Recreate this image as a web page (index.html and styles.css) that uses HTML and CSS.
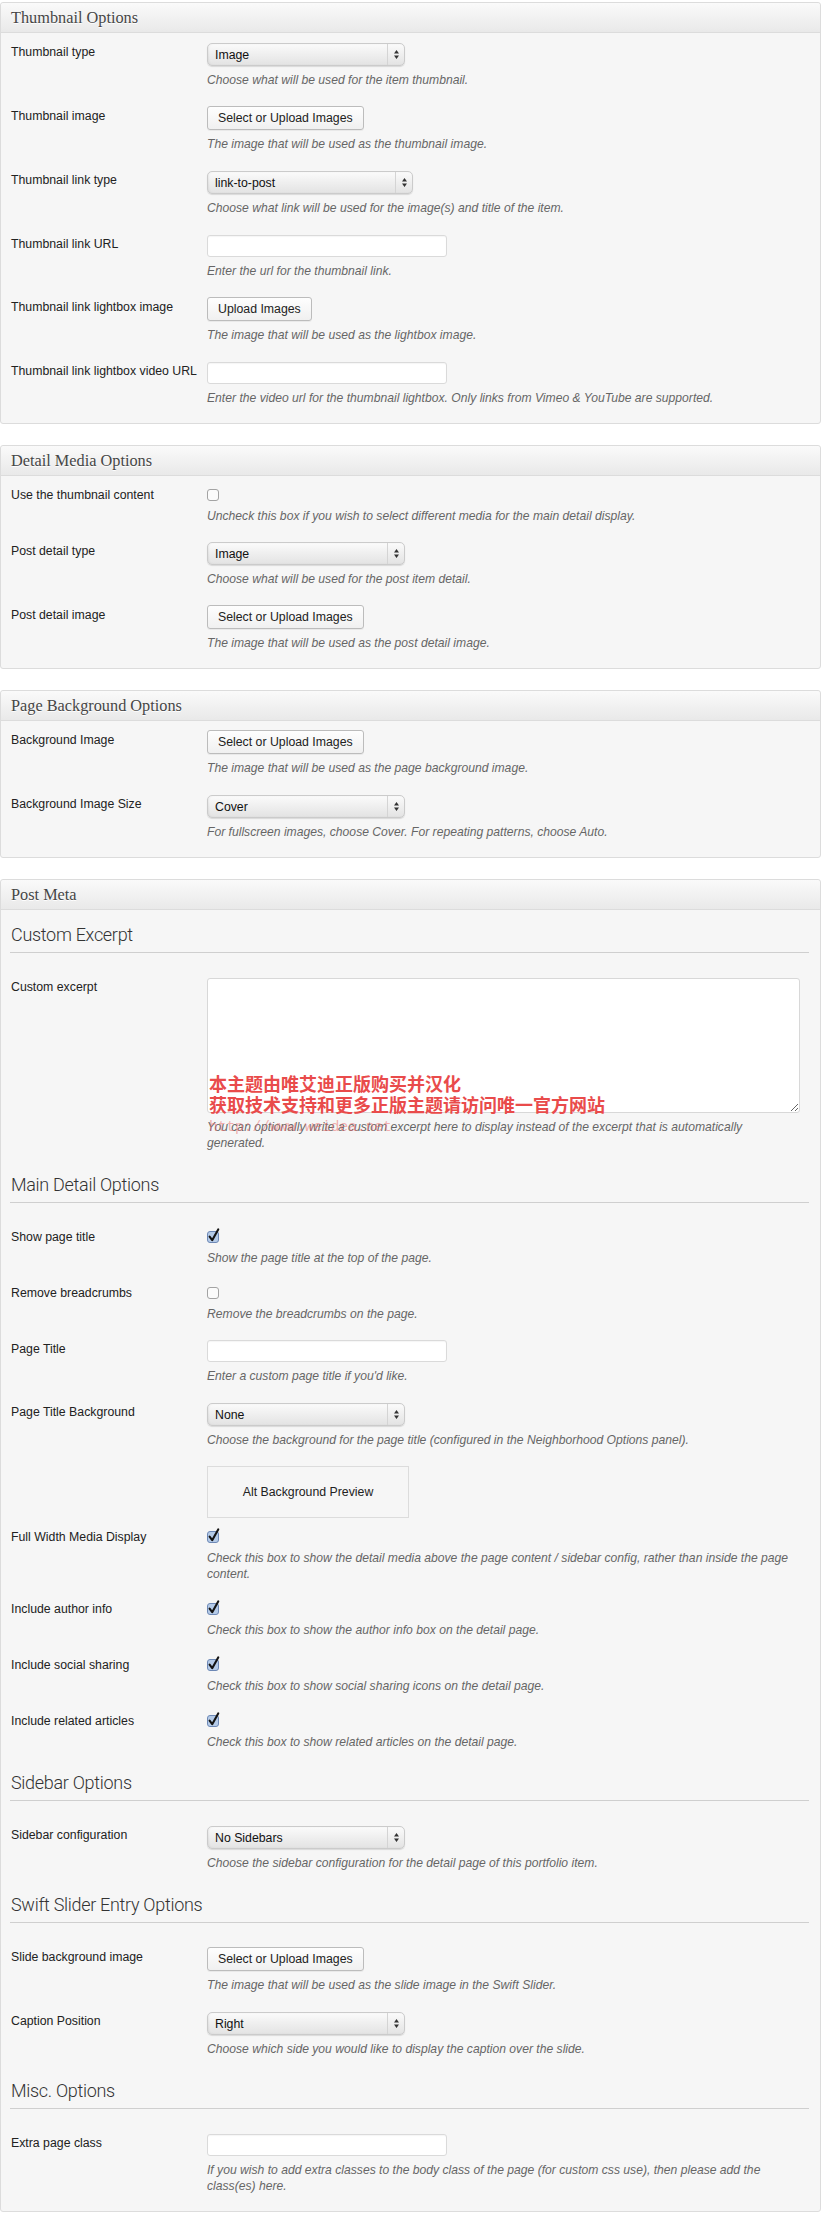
FILE: index.html
```html
<!DOCTYPE html>
<html>
<head>
<meta charset="utf-8">
<link rel="stylesheet" href="styles.css">
</head>
<body>

<div class="panel">
  <div class="panel-head">Thumbnail Options</div>
  <div class="panel-body">
    <div class="row">
      <div class="label">Thumbnail type</div>
      <div class="field">
        <div class="select"><span class="select-text">Image</span><span class="select-arrows"><svg width="5" height="9" viewBox="0 0 5 9"><path d="M0 3.6 L2.5 0 L5 3.6 Z M0 5.4 L2.5 9 L5 5.4 Z" fill="#333"/></svg></span></div>
        <p class="desc">Choose what will be used for the item thumbnail.</p>
      </div>
    </div>
    <div class="row">
      <div class="label">Thumbnail image</div>
      <div class="field">
        <button class="btn">Select or Upload Images</button>
        <p class="desc">The image that will be used as the thumbnail image.</p>
      </div>
    </div>
    <div class="row">
      <div class="label">Thumbnail link type</div>
      <div class="field">
        <div class="select select-wide"><span class="select-text">link-to-post</span><span class="select-arrows"><svg width="5" height="9" viewBox="0 0 5 9"><path d="M0 3.6 L2.5 0 L5 3.6 Z M0 5.4 L2.5 9 L5 5.4 Z" fill="#333"/></svg></span></div>
        <p class="desc">Choose what link will be used for the image(s) and title of the item.</p>
      </div>
    </div>
    <div class="row">
      <div class="label">Thumbnail link URL</div>
      <div class="field">
        <input class="input" type="text">
        <p class="desc">Enter the url for the thumbnail link.</p>
      </div>
    </div>
    <div class="row">
      <div class="label">Thumbnail link lightbox image</div>
      <div class="field">
        <button class="btn">Upload Images</button>
        <p class="desc">The image that will be used as the lightbox image.</p>
      </div>
    </div>
    <div class="row">
      <div class="label">Thumbnail link lightbox video URL</div>
      <div class="field">
        <input class="input" type="text">
        <p class="desc">Enter the video url for the thumbnail lightbox. Only links from Vimeo &amp; YouTube are supported.</p>
      </div>
    </div>
  </div>
</div>

<div class="panel">
  <div class="panel-head">Detail Media Options</div>
  <div class="panel-body">
    <div class="row row-check">
      <div class="label">Use the thumbnail content</div>
      <div class="field">
        <svg class="check" width="13" height="16" viewBox="0 0 13 16"><rect x="0.5" y="3.5" width="11" height="11" rx="2.5" fill="#fbfbfb" stroke="#a3a3a3"/></svg>
        <p class="desc">Uncheck this box if you wish to select different media for the main detail display.</p>
      </div>
    </div>
    <div class="row">
      <div class="label">Post detail type</div>
      <div class="field">
        <div class="select"><span class="select-text">Image</span><span class="select-arrows"><svg width="5" height="9" viewBox="0 0 5 9"><path d="M0 3.6 L2.5 0 L5 3.6 Z M0 5.4 L2.5 9 L5 5.4 Z" fill="#333"/></svg></span></div>
        <p class="desc">Choose what will be used for the post item detail.</p>
      </div>
    </div>
    <div class="row">
      <div class="label">Post detail image</div>
      <div class="field">
        <button class="btn">Select or Upload Images</button>
        <p class="desc">The image that will be used as the post detail image.</p>
      </div>
    </div>
  </div>
</div>

<div class="panel">
  <div class="panel-head">Page Background Options</div>
  <div class="panel-body">
    <div class="row">
      <div class="label">Background Image</div>
      <div class="field">
        <button class="btn">Select or Upload Images</button>
        <p class="desc">The image that will be used as the page background image.</p>
      </div>
    </div>
    <div class="row">
      <div class="label">Background Image Size</div>
      <div class="field">
        <div class="select"><span class="select-text">Cover</span><span class="select-arrows"><svg width="5" height="9" viewBox="0 0 5 9"><path d="M0 3.6 L2.5 0 L5 3.6 Z M0 5.4 L2.5 9 L5 5.4 Z" fill="#333"/></svg></span></div>
        <p class="desc">For fullscreen images, choose Cover. For repeating patterns, choose Auto.</p>
      </div>
    </div>
  </div>
</div>

<div class="panel">
  <div class="panel-head">Post Meta</div>
  <div class="panel-body">
    <h3 class="section-title">Custom Excerpt</h3>
    <div class="row">
      <div class="label">Custom excerpt</div>
      <div class="field">
        <div class="excerpt-wrap">
          <textarea class="textarea"></textarea>
          <div class="watermark">本主题由唯艾迪正版购买并汉化<br>获取技术支持和更多正版主题请访问唯一官方网站</div>
          <div class="watermark-url">http://www.weidea.net</div>
        </div>
        <p class="desc">You can optionally write a custom excerpt here to display instead of the excerpt that is automatically generated.</p>
      </div>
    </div>

    <h3 class="section-title">Main Detail Options</h3>
    <div class="row row-check">
      <div class="label">Show page title</div>
      <div class="field">
        <svg class="check" width="13" height="16" viewBox="0 0 13 16"><rect x="0.5" y="3.5" width="11" height="11" rx="2.5" fill="#b5cbe8" stroke="#6d88b5"/><path d="M2.6 8.6 L5.2 12.2 L11.2 1.4" fill="none" stroke="#141414" stroke-width="2.1" stroke-linecap="round" stroke-linejoin="round"/></svg>
        <p class="desc">Show the page title at the top of the page.</p>
      </div>
    </div>
    <div class="row row-check">
      <div class="label">Remove breadcrumbs</div>
      <div class="field">
        <svg class="check" width="13" height="16" viewBox="0 0 13 16"><rect x="0.5" y="3.5" width="11" height="11" rx="2.5" fill="#fbfbfb" stroke="#a3a3a3"/></svg>
        <p class="desc">Remove the breadcrumbs on the page.</p>
      </div>
    </div>
    <div class="row">
      <div class="label">Page Title</div>
      <div class="field">
        <input class="input" type="text">
        <p class="desc">Enter a custom page title if you'd like.</p>
      </div>
    </div>
    <div class="row row-preview">
      <div class="label">Page Title Background</div>
      <div class="field">
        <div class="select"><span class="select-text">None</span><span class="select-arrows"><svg width="5" height="9" viewBox="0 0 5 9"><path d="M0 3.6 L2.5 0 L5 3.6 Z M0 5.4 L2.5 9 L5 5.4 Z" fill="#333"/></svg></span></div>
        <p class="desc">Choose the background for the page title (configured in the Neighborhood Options panel).</p>
        <div class="preview">Alt Background Preview</div>
      </div>
    </div>
    <div class="row row-check">
      <div class="label">Full Width Media Display</div>
      <div class="field">
        <svg class="check" width="13" height="16" viewBox="0 0 13 16"><rect x="0.5" y="3.5" width="11" height="11" rx="2.5" fill="#b5cbe8" stroke="#6d88b5"/><path d="M2.6 8.6 L5.2 12.2 L11.2 1.4" fill="none" stroke="#141414" stroke-width="2.1" stroke-linecap="round" stroke-linejoin="round"/></svg>
        <p class="desc">Check this box to show the detail media above the page content / sidebar config, rather than inside the page content.</p>
      </div>
    </div>
    <div class="row row-check">
      <div class="label">Include author info</div>
      <div class="field">
        <svg class="check" width="13" height="16" viewBox="0 0 13 16"><rect x="0.5" y="3.5" width="11" height="11" rx="2.5" fill="#b5cbe8" stroke="#6d88b5"/><path d="M2.6 8.6 L5.2 12.2 L11.2 1.4" fill="none" stroke="#141414" stroke-width="2.1" stroke-linecap="round" stroke-linejoin="round"/></svg>
        <p class="desc">Check this box to show the author info box on the detail page.</p>
      </div>
    </div>
    <div class="row row-check">
      <div class="label">Include social sharing</div>
      <div class="field">
        <svg class="check" width="13" height="16" viewBox="0 0 13 16"><rect x="0.5" y="3.5" width="11" height="11" rx="2.5" fill="#b5cbe8" stroke="#6d88b5"/><path d="M2.6 8.6 L5.2 12.2 L11.2 1.4" fill="none" stroke="#141414" stroke-width="2.1" stroke-linecap="round" stroke-linejoin="round"/></svg>
        <p class="desc">Check this box to show social sharing icons on the detail page.</p>
      </div>
    </div>
    <div class="row row-check">
      <div class="label">Include related articles</div>
      <div class="field">
        <svg class="check" width="13" height="16" viewBox="0 0 13 16"><rect x="0.5" y="3.5" width="11" height="11" rx="2.5" fill="#b5cbe8" stroke="#6d88b5"/><path d="M2.6 8.6 L5.2 12.2 L11.2 1.4" fill="none" stroke="#141414" stroke-width="2.1" stroke-linecap="round" stroke-linejoin="round"/></svg>
        <p class="desc">Check this box to show related articles on the detail page.</p>
      </div>
    </div>

    <h3 class="section-title">Sidebar Options</h3>
    <div class="row">
      <div class="label">Sidebar configuration</div>
      <div class="field">
        <div class="select"><span class="select-text">No Sidebars</span><span class="select-arrows"><svg width="5" height="9" viewBox="0 0 5 9"><path d="M0 3.6 L2.5 0 L5 3.6 Z M0 5.4 L2.5 9 L5 5.4 Z" fill="#333"/></svg></span></div>
        <p class="desc">Choose the sidebar configuration for the detail page of this portfolio item.</p>
      </div>
    </div>

    <h3 class="section-title">Swift Slider Entry Options</h3>
    <div class="row">
      <div class="label">Slide background image</div>
      <div class="field">
        <button class="btn">Select or Upload Images</button>
        <p class="desc">The image that will be used as the slide image in the Swift Slider.</p>
      </div>
    </div>
    <div class="row">
      <div class="label">Caption Position</div>
      <div class="field">
        <div class="select"><span class="select-text">Right</span><span class="select-arrows"><svg width="5" height="9" viewBox="0 0 5 9"><path d="M0 3.6 L2.5 0 L5 3.6 Z M0 5.4 L2.5 9 L5 5.4 Z" fill="#333"/></svg></span></div>
        <p class="desc">Choose which side you would like to display the caption over the slide.</p>
      </div>
    </div>

    <h3 class="section-title">Misc. Options</h3>
    <div class="row">
      <div class="label">Extra page class</div>
      <div class="field">
        <input class="input" type="text">
        <p class="desc">If you wish to add extra classes to the body class of the page (for custom css use), then please add the class(es) here.</p>
      </div>
    </div>
  </div>
</div>

</body>
</html>
```

FILE: styles.css
```css
* { box-sizing: border-box; }

body {
  margin: 0;
  padding: 2px 2px 0 0;
  background: #fff;
  font-family: "Liberation Sans", Arial, sans-serif;
  font-size: 12px;
  color: #333;
}

.panel {
  border: 1px solid #dcdcdc;
  border-radius: 3px;
  background: #f6f6f6;
  margin-bottom: 21px;
}
.panel:last-child { margin-bottom: 0; }

.panel-head {
  height: 30px;
  border-bottom: 1px solid #dcdcdc;
  border-radius: 3px 3px 0 0;
  background: linear-gradient(#fafafa, #e9e9e9);
  font-family: "Liberation Serif", Georgia, serif;
  font-size: 16.3px;
  line-height: 29px;
  color: #464646;
  padding-left: 10px;
  text-shadow: 0 1px 0 #fff;
}

.panel-body {
  padding: 0 11px 8px 9px;
}

.row {
  display: grid;
  grid-template-columns: 197px 1fr;
  padding: 10px 0 9px;
}
.row-check { padding-bottom: 8px; }
.row-preview { padding-bottom: 0; }

.label {
  line-height: 18px;
  padding-left: 1px;
  font-size: 12.3px;
  color: #222;
}

.field { min-width: 0; }

.desc {
  max-width: 592px;
  margin: 6px 0 0;
  font-style: italic;
  font-size: 12.15px;
  line-height: 16px;
  color: #666;
}

.select {
  display: flex;
  align-items: center;
  width: 198px;
  height: 23px;
  border: 1px solid #cbcbcb;
  border-radius: 5px;
  background: linear-gradient(#fbfbfb, #f0f0f0 45%, #e3e3e3);
  box-shadow: 0 1px 1px rgba(0, 0, 0, 0.12), inset 1px 0 2px rgba(0, 0, 0, 0.06);
}
.select-wide { width: 206px; }
.select-text {
  flex: 1;
  padding-left: 7px;
  color: #111;
  font-size: 12.3px;
}
.select-arrows {
  width: 17px;
  height: 100%;
  border-left: 1px solid #d4d4d4;
  display: flex;
  align-items: center;
  justify-content: center;
}
.select-arrows svg { display: block; }

.btn {
  display: block;
  height: 24px;
  margin: -1px 0 0;
  padding: 0 10px;
  border: 1px solid #bcbcbc;
  border-radius: 3px;
  background: linear-gradient(#fefefe, #f0f0f0);
  font-family: "Liberation Sans", Arial, sans-serif;
  font-size: 12.3px;
  color: #222;
  box-shadow: 0 1px 0 rgba(0, 0, 0, 0.05);
}

.input {
  display: block;
  width: 240px;
  height: 22px;
  margin: 0;
  border: 1px solid #dadada;
  border-radius: 3px;
  background: #fff;
  box-shadow: inset 0 1px 1px rgba(0, 0, 0, 0.04);
}

.check { display: block; }

.section-title {
  margin: 0 0 15px;
  padding: 13px 0 5px 1px;
  border-bottom: 1px solid #cfcfcf;
  font-family: Roboto, "Liberation Sans", sans-serif;
  font-weight: 300;
  font-size: 18px;
  letter-spacing: -0.3px;
  line-height: 24px;
  color: #333;
}

.excerpt-wrap { position: relative; }

.textarea {
  display: block;
  width: 593px;
  height: 135px;
  margin: 0;
  border: 1px solid #d8d8d8;
  border-radius: 3px;
  background: #fff;
}

.watermark {
  position: absolute;
  left: 2px;
  top: 95px;
  font-family: "Noto Sans CJK SC", sans-serif;
  font-weight: 700;
  font-size: 18px;
  line-height: 21px;
  color: #e94b4b;
  white-space: nowrap;
}
.watermark-url {
  position: absolute;
  left: 2px;
  top: 140px;
  font-family: "Liberation Mono", monospace;
  font-size: 14.5px;
  line-height: 18px;
  color: rgba(235, 110, 110, 0.55);
  white-space: nowrap;
}

.preview {
  width: 202px;
  height: 52px;
  margin-top: 18px;
  border: 1px solid #dcdcdc;
  display: flex;
  align-items: center;
  justify-content: center;
  font-size: 12.3px;
  color: #222;
}
```
